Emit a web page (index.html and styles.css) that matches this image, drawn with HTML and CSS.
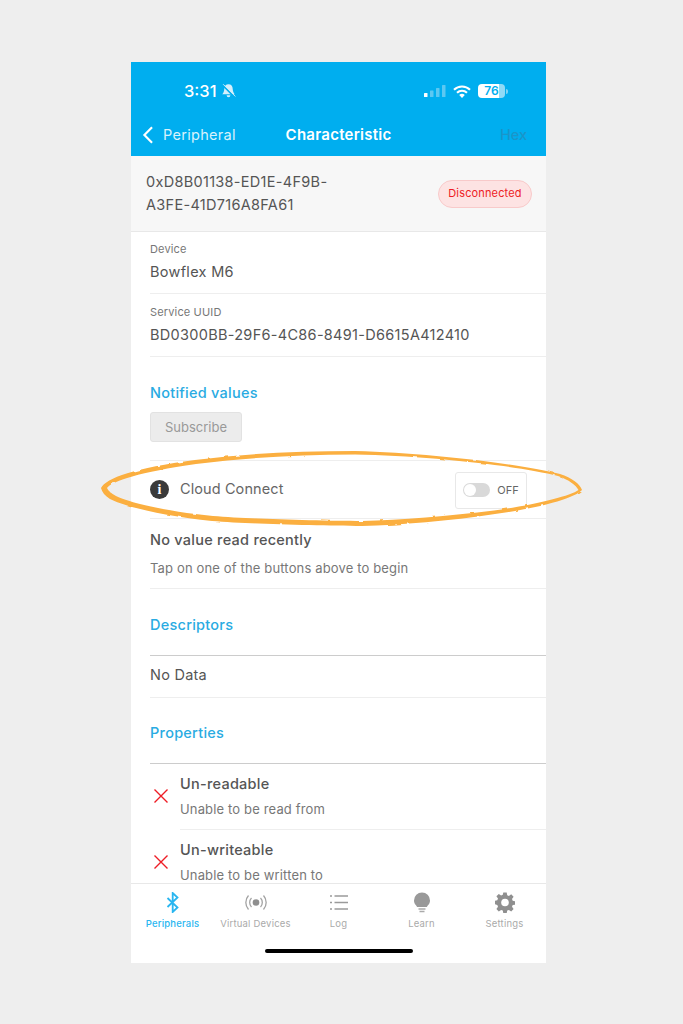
FILE: index.html
```html
<!DOCTYPE html>
<html lang="en">
<head>
<meta charset="utf-8">
<title>Characteristic</title>
<link rel="stylesheet" href="styles.css">
</head>
<body>
<main class="phone">
  <header class="top">
    <div class="status">
      <div class="status-left">
        <span class="time">3:31</span>
        <svg class="bell" viewBox="0 0 16 16" width="15" height="16"><path d="M8 .8C5.200.8 3.500 3 3.500 5.800c0 3-1.300 4.400-2.200 5.700h13.400c-.9-1.300-2.200-2.700-2.200-5.700C12.500 3 10.800.8 8 .8z" fill="#d5effb"/><path d="M6 12.600a2 2 0 0 0 4 0z" fill="#d5effb"/><path d="M1.500 1.500l13 13" stroke="#00aeef" stroke-width="1.800"/><path d="M2.300.8l13 13" stroke="#d5effb" stroke-width="1"/></svg>
      </div>
      <div class="status-right">
        <svg class="signal" viewBox="0 0 22 12" width="22" height="12"><rect x="0" y="8" width="3.500" height="4" rx=".6" fill="#fff"/><rect x="6" y="5.500" width="3.500" height="6.500" rx=".6" fill="#5cc8f2"/><rect x="12" y="3" width="3.500" height="9" rx=".6" fill="#5cc8f2"/><rect x="18" y="0" width="3.500" height="12" rx=".6" fill="#5cc8f2"/></svg>
        <svg class="wifi" viewBox="0 0 18 13" width="18" height="13"><path d="M1 4.700a11.500 11.500 0 0 1 16 0" fill="none" stroke="#fff" stroke-width="2.100"/><path d="M4 7.800a7.200 7.200 0 0 1 10 0" fill="none" stroke="#fff" stroke-width="2.100"/><path d="M6.200 10.100L9 13l2.800-2.900a4 4 0 0 0-5.600 0z" fill="#fff"/></svg>
        <div class="battery"><span class="battery-fill">76</span><span class="battery-cap"></span></div>
      </div>
    </div>
    <nav class="navbar">
      <div class="back">
        <svg viewBox="0 0 12 20" width="12" height="18"><path d="M10.500 1.500L2 10l8.500 8.500" fill="none" stroke="#fff" stroke-width="2.400"/></svg>
        <span>Peripheral</span>
      </div>
      <div class="nav-title">Characteristic</div>
      <div class="nav-hex">Hex</div>
    </nav>
  </header>

  <section class="idbar">
    <div class="idtext">0xD8B01138-ED1E-4F9B-<br>A3FE-41D716A8FA61</div>
    <div class="pill">Disconnected</div>
  </section>

  <div class="scroll">
    <div class="info info-first">
      <div class="label">Device</div>
      <div class="value">Bowflex M6</div>
    </div>
    <div class="info">
      <div class="label">Service UUID</div>
      <div class="value">BD0300BB-29F6-4C86-8491-D6615A412410</div>
    </div>

    <div class="notified">
      <h2 class="heading">Notified values</h2>
      <div class="subscribe">Subscribe</div>
    </div>

    <div class="cloud">
      <div class="cloud-left">
        <span class="info-icon">i</span>
        <span class="cloud-text">Cloud Connect</span>
      </div>
      <div class="toggle-box">
        <span class="toggle"><span class="knob"></span></span>
        <span class="off">OFF</span>
      </div>
    </div>

    <div class="novalue">
      <div class="strong">No value read recently</div>
      <div class="sub">Tap on one of the buttons above to begin</div>
    </div>

    <h2 class="heading section-head section-desc">Descriptors</h2>
    <div class="nodata strong">No Data</div>
    <h2 class="heading section-head section-prop">Properties</h2>

    <div class="prop">
      <svg class="x" viewBox="0 0 14 14" width="14" height="14"><path d="M.5.5l13 13M13.500.5l-13 13" stroke="#ee1c25" stroke-width="1.400" fill="none"/></svg>
      <div class="prop-text">
        <div class="strong">Un-readable</div>
        <div class="sub">Unable to be read from</div>
      </div>
    </div>
    <div class="prop">
      <svg class="x" viewBox="0 0 14 14" width="14" height="14"><path d="M.5.5l13 13M13.500.5l-13 13" stroke="#ee1c25" stroke-width="1.400" fill="none"/></svg>
      <div class="prop-text">
        <div class="strong">Un-writeable</div>
        <div class="sub">Unable to be written to</div>
      </div>
    </div>
  </div>

  <footer class="tabs">
    <div class="tabrow">
      <div class="tab tab-on">
        <svg viewBox="0 0 14 21" width="14" height="21"><path d="M1.500 6l10 9.500-4.800 4.500V1l4.800 4.500L1.500 15" fill="none" stroke="#29b6f0" stroke-width="1.800"/></svg>
        <span>Peripherals</span>
      </div>
      <div class="tab">
        <svg viewBox="0 0 24 21" width="24" height="21"><circle cx="12" cy="10.500" r="3.300" fill="#8f8f8f"/><path d="M7.500 6a6.500 6.500 0 0 0 0 9M16.500 6a6.500 6.500 0 0 1 0 9M4.500 3.500a10.500 10.500 0 0 0 0 14M19.500 3.500a10.500 10.500 0 0 1 0 14" fill="none" stroke="#a3a3a3" stroke-width="1.300"/></svg>
        <span>Virtual Devices</span>
      </div>
      <div class="tab">
        <svg viewBox="0 0 20 21" width="20" height="21"><path d="M5.500 4H19M5.500 10.500H19M5.500 17H19" stroke="#9a9a9a" stroke-width="1.400"/><path d="M1 4h2M1 10.500h2M1 17h2" stroke="#9a9a9a" stroke-width="1.600"/></svg>
        <span>Log</span>
      </div>
      <div class="tab">
        <svg viewBox="0 0 18 21" width="18" height="21"><path d="M9 .5a8 8 0 0 0-8 8c0 3.500 2.400 4.800 3.200 6.500h9.600C14.600 13.300 17 12 17 8.500a8 8 0 0 0-8-8z" fill="#999"/><path d="M5.500 17h7M6.500 19.500h5" stroke="#aaa" stroke-width="1.300"/></svg>
        <span>Learn</span>
      </div>
      <div class="tab">
        <svg viewBox="0 0 20 21" width="20" height="21"><path d="M8.300.5h3.400l.5 2.700 1.700.7 2.300-1.600 2.400 2.400-1.600 2.300.7 1.700 2.700.5v3.400l-2.700.5-.7 1.700 1.600 2.300-2.400 2.400-2.300-1.600-1.700.7-.5 2.700H8.300l-.5-2.700-1.700-.7-2.300 1.600-2.400-2.400 1.600-2.300-.7-1.700L0 12.200V8.800l2.300-.5.700-1.700-1.600-2.300 2.400-2.400 2.300 1.600 1.700-.7z" fill="#8f8f8f"/><circle cx="10" cy="10.500" r="3.800" fill="#fff"/></svg>
        <span>Settings</span>
      </div>
    </div>
    <div class="home"></div>
  </footer>

  <svg class="scribble" viewBox="95 440 495 95" width="495" height="95">
    <filter id="rough" x="0" y="0" width="100%" height="100%"><feTurbulence type="fractalNoise" baseFrequency=".09" numOctaves="2" seed="4"/><feDisplacementMap in="SourceGraphic" scale="2.500"/></filter>
    <path filter="url(#rough)" fill-rule="evenodd" fill="#fbaf3f" d="M101 488C106 478 135 468 195 460C250 453 300 451 355 451C430 453 520 464 560 474C572 478 580 484 582 490C575 498 540 508 495 514C450 521 400 525 362 526C320 526 250 524 212 521C170 517 125 507 110 499C105 496 102 492 101 488ZM107 488C112 481 140 472 196 464C250 457 300 455 355 454.500C430 456 520 466 558 476C569 480 576 485 578.500 490C570 496 535 505 494 510.500C450 516 400 520 362 521C320 521 250 519 213 516C170 512 130 503 116 496C111 493 108 491 107 488Z"/>
  </svg>
</main>
</body>
</html>
```

FILE: styles.css
```css
* { box-sizing: border-box; }
html, body { margin: 0; padding: 0; }
body {
  width: 683px;
  height: 1024px;
  background: #eeeeee;
  font-family: Inter, "Noto Sans", sans-serif;
  padding: 62px 137px 0 131px;
  overflow: hidden;
  color: #555;
}
.phone {
  position: relative;
  width: 415px;
  height: 901px;
  background: #fff;
  display: flex;
  flex-direction: column;
}
.top { height: 94px; flex: none; background: #00aeef; color: #fff; }
.status {
  height: 51px;
  padding: 19px 38px 0 53px;
  display: flex;
  justify-content: space-between;
  align-items: flex-start;
}
.status-left { display: flex; align-items: center; gap: 4px; height: 20px; }
.time { font-size: 16.500px; font-weight: 500; }
.status-right { display: flex; align-items: center; gap: 7px; height: 20px; }
.battery { display: flex; align-items: center; gap: 1px; }
.battery-fill {
  width: 27px; height: 14px; border-radius: 4px;
  background: linear-gradient(to right, #fff 78%, #8fdaf6 78%);
  color: #00aeef;
  font-size: 12px; font-weight: 600; text-align: center; line-height: 14px;
}
.battery-cap { width: 2px; height: 5px; background: #7fd3f4; border-radius: 0 2px 2px 0; }
.navbar {
  height: 43px;
  display: grid;
  grid-template-columns: 1fr auto 1fr;
  align-items: center;
  padding: 0 19px;
}
.back { display: flex; align-items: center; gap: 9px; margin-left: -8px; font-size: 14.500px; letter-spacing: .3px; color: #d9f2fc; }
.nav-title { font-size: 15px; font-weight: 600; letter-spacing: .25px; color: #fff; }
.nav-hex { justify-self: end; font-size: 14.500px; color: #1a95c9; font-weight: 500; }
.idbar {
  height: 76px; flex: none;
  background: #f7f7f7;
  border-bottom: 1px solid #e8e8e8;
  display: flex;
  align-items: center;
  justify-content: space-between;
  padding: 0 14px 0 15px;
}
.idtext { font-size: 14.500px; line-height: 23px; letter-spacing: .3px; color: #555; padding-bottom: 2px; }
.pill {
  width: 94px; height: 28px;
  border-radius: 14px;
  background: #fde3e3;
  border: 1px solid #f8caca;
  color: #ee1c25;
  font-size: 11px;
  letter-spacing: .15px;
  text-align: center;
  line-height: 24px;
}
.scroll { flex: 1; min-height: 0; overflow: hidden; padding-left: 19px; }
.info { height: 63px; border-bottom: 1px solid #eee; padding-top: 11px; }
.info-first { height: 62px; padding-top: 10px; }
.label { font-size: 11px; letter-spacing: .15px; color: #777; line-height: 14px; }
.value { font-size: 14.500px; letter-spacing: .3px; color: #555; line-height: 20px; margin-top: 6px; }
.heading { margin: 0; font-size: 14.500px; font-weight: 500; letter-spacing: .25px; color: #29abe2; }
.notified { height: 104px; border-bottom: 1px solid #eee; padding-top: 27px; }
.subscribe {
  margin-top: 11px;
  width: 92px; height: 30px;
  background: #ececec;
  border: 1px solid #e2e2e2;
  border-radius: 3px;
  color: #999;
  font-size: 13px;
  text-align: center;
  line-height: 28px;
}
.cloud {
  height: 58px;
  border-bottom: 1px solid #eee;
  display: flex;
  align-items: center;
  justify-content: space-between;
  padding-right: 19px;
}
.cloud-left { display: flex; align-items: center; gap: 11px; }
.info-icon {
  width: 19px; height: 19px; border-radius: 50%;
  background: #3a3a3a; color: #fff;
  font-family: "Liberation Serif", serif; font-weight: 700; font-size: 14px;
  text-align: center; line-height: 19px;
}
.cloud-text { font-size: 14.500px; letter-spacing: .1px; color: #666; padding-bottom: 2px; }
.toggle-box {
  width: 72px; height: 37px;
  margin-top: 1px;
  border: 1px solid #e8e8e8;
  border-radius: 3px;
  display: flex;
  align-items: center;
  justify-content: center;
  gap: 7px;
}
.toggle { width: 27px; height: 14px; border-radius: 7px; background: #d9d9d9; padding: 1px; display: block; }
.knob { display: block; width: 12px; height: 12px; border-radius: 50%; background: #fff; }
.off { font-size: 11px; color: #666; }
.strong { font-size: 14.500px; font-weight: 500; letter-spacing: .25px; color: #555; }
.sub { font-size: 13px; letter-spacing: .15px; color: #777; }
.novalue { height: 70px; border-bottom: 1px solid #eee; padding-top: 12px; }
.novalue .sub { margin-top: 12px; }
.section-head { border-bottom: 1px solid #ccc; }
.section-desc { height: 67px; padding-top: 27px; }
.section-prop { height: 66px; padding-top: 26px; }
.nodata { height: 42px; border-bottom: 1px solid #eee; line-height: 38px; font-weight: 400; }
.prop { display: flex; gap: 12px; height: 66px; align-items: flex-start; }
.x { flex: none; margin-left: 4px; margin-top: 25px; }
.prop-text { flex: 1; height: 66px; border-bottom: 1px solid #eee; padding-top: 11px; }
.prop-text .sub { margin-top: 9px; }
.tabs {
  height: 80px; flex: none;
  background: #fff;
  border-top: 1px solid #e8e8e8;
  padding-top: 8px;
}
.tabrow { display: flex; height: 50px; }
.tab {
  flex: 1;
  display: flex; flex-direction: column; align-items: center;
  gap: 5px;
  font-size: 9.500px;
  letter-spacing: .2px;
  color: #aaa;
}
.tab-on { color: #29b6f0; font-weight: 500; }
.home { width: 148px; height: 4px; background: #000; border-radius: 2px; margin: 7px auto 0; }
.scribble { position: absolute; left: -36px; top: 378px; }
```
